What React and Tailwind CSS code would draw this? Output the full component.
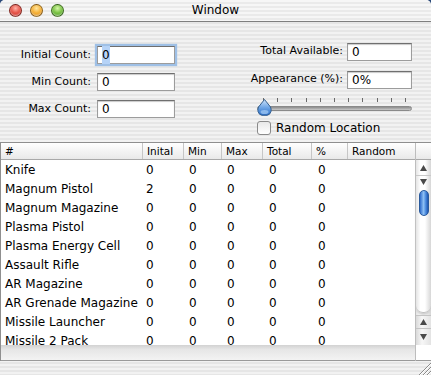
import React from "react";

const rows = [
    ["Knife", "0"],
    ["Magnum Pistol", "2"],
    ["Magnum Magazine", "0"],
    ["Plasma Pistol", "0"],
    ["Plasma Energy Cell", "0"],
    ["Assault Rifle", "0"],
    ["AR Magazine", "0"],
    ["AR Grenade Magazine", "0"],
    ["Missile Launcher", "0"],
    ["Missile 2 Pack", "0"],
];

const cols = "grid grid-cols-[142px_41px_38px_41px_49px_36px_68px]";

function Light({ color }) {
    return (
        <div className={`w-[13px] h-[13px] rounded-full border border-black/40 ${color} shadow-[inset_0_-1px_2px_rgba(255,255,255,0.6)]`} />
    );
}

function TextBox({ value, width, focused, selected }) {
    return (
        <div
            className={`h-[18px] ${width} shrink-0 bg-white border border-[#9c9c9c] border-t-[#6f6f6f] flex items-center pl-[4px] text-[12px] text-black ${focused ? "border-[#6d8fbf] shadow-[0_0_1px_2px_#9fc0e6]" : "shadow-[inset_0_1px_1px_#c9c9c9]"}`}
        >
            {selected ? <span className="bg-[#b6d3f7]">{value}</span> : value}
        </div>
    );
}

function Arrow({ up }) {
    return (
        <svg width="7" height="6" viewBox="0 0 7 6">
            <path d={up ? "M3.5 0 L7 6 L0 6 Z" : "M0 0 L7 0 L3.5 6 Z"} fill="#4a4a4a" />
        </svg>
    );
}

function ScrollButton({ up, h }) {
    return (
        <div className={`${h} w-full flex items-center justify-center bg-[linear-gradient(to_right,#d9d9d9,#f7f7f7_40%,#e3e3e3)] border-t border-[#c4c4c4]`}>
            <Arrow up={up} />
        </div>
    );
}

export default function App() {
    return (
        <div className="w-[431px] h-[375px] bg-[#2b4a7a] overflow-hidden font-['DejaVu_Sans',sans-serif] text-black">
            <div className="w-full h-full rounded-t-[5px] overflow-hidden flex flex-col bg-[repeating-linear-gradient(to_bottom,#f2f2f2_0px,#f2f2f2_2px,#e6e6e6_2px,#e6e6e6_4px)]">
                {/* title bar */}
                <div className="relative h-[22px] shrink-0 border-b border-[#7f7f7f] bg-[repeating-linear-gradient(to_bottom,#f6f6f6_0px,#f6f6f6_2px,#eaeaea_2px,#eaeaea_4px)] flex items-center">
                    <div className="flex gap-[8px] pl-[9px] pb-[1px]">
                        <Light color="bg-[radial-gradient(circle_at_50%_30%,#ffb3a8,#e2473b_55%,#a8180f)]" />
                        <Light color="bg-[radial-gradient(circle_at_50%_30%,#ffe7a0,#f4a928_55%,#b26a05)]" />
                        <Light color="bg-[radial-gradient(circle_at_50%_30%,#d6f7a8,#6dbb36_55%,#2f7a10)]" />
                    </div>
                    <div className="absolute inset-0 flex items-center justify-center text-[12px] pb-[1px]">Window</div>
                </div>

                {/* form */}
                <div className="h-[120px] shrink-0 flex">
                    <div className="pt-[24px] grid grid-cols-[91px_78px] gap-x-[6px] gap-y-[9px] items-center text-[11px] auto-rows-[18px]">
                        <div className="text-right">Initial Count:</div>
                        <TextBox value="0" width="w-[78px]" focused selected />
                        <div className="text-right">Min Count:</div>
                        <TextBox value="0" width="w-[78px]" />
                        <div className="text-right">Max Count:</div>
                        <TextBox value="0" width="w-[78px]" />
                    </div>
                    <div className="ml-[82px] pt-[20px] w-[155px] flex flex-col">
                        <div className="flex flex-col gap-[9px] text-[11px]">
                            <div className="h-[19px] flex items-center justify-end gap-[4px] whitespace-nowrap">
                                <span>Total Available:</span>
                                <TextBox value="0" width="w-[65px]" />
                            </div>
                            <div className="h-[19px] flex items-center justify-end gap-[4px] whitespace-nowrap">
                                <span>Appearance (%):</span>
                                <TextBox value="0%" width="w-[65px]" />
                            </div>
                        </div>
                        {/* slider */}
                        <div className="relative h-[18px] mt-[9px]">
                            <div className="flex justify-between pl-[6px] pr-[6px]">
                                {Array.from({ length: 11 }).map((_, i) => (
                                    <div key={i} className="w-px h-[4px] bg-[#6a6a6a]" />
                                ))}
                            </div>
                            <div className="mt-[4px] h-[5px] rounded-full bg-[linear-gradient(to_bottom,#8c8c8c,#c9c9c9)] border border-[#8a8a8a]" />
                            <svg className="absolute left-0 top-[1px]" width="15" height="17" viewBox="0 0 15 17">
                                <defs>
                                    <linearGradient id="th" x1="0" y1="0" x2="0" y2="1">
                                        <stop offset="0" stopColor="#cfe4fb" />
                                        <stop offset="0.5" stopColor="#6fa6e6" />
                                        <stop offset="1" stopColor="#2d6fc8" />
                                    </linearGradient>
                                </defs>
                                <path d="M7.5 0.5 L13.5 8 Q14.5 10 14 12.5 Q13 16 10 16.3 L5 16.3 Q2 16 1 12.5 Q0.5 10 1.5 8 Z" fill="url(#th)" stroke="#35608f" strokeWidth="1" />
                                <ellipse cx="7.5" cy="13" rx="4" ry="2" fill="#9cc6f3" opacity="0.8" />
                            </svg>
                        </div>
                        <div className="mt-[5px] flex items-center gap-[5px]">
                            <div className="w-[14px] h-[14px] rounded-[3px] border border-[#8a8a8a] bg-[linear-gradient(to_bottom,#e8e8e8,#ffffff)]" />
                            <span className="text-[12px] leading-none">Random Location</span>
                        </div>
                    </div>
                </div>

                {/* table */}
                <div className="shrink-0 h-[219px] border-t border-l border-[#8f8f8f] flex bg-white">
                    <div className="w-[414px] flex flex-col">
                        <div className={`${cols} h-[17px] text-[10.5px] bg-[linear-gradient(to_bottom,#ffffff,#e9e9e9)] border-b border-[#a9a9a9]`}>
                            {["#", "Inital", "Min", "Max", "Total", "%", "Random"].map((h) => (
                                <div key={h} className="pl-[4px] border-r border-[#c6c6c6] leading-[16px]">{h}</div>
                            ))}
                        </div>
                        <div className="h-[185px] overflow-hidden bg-white text-[12px]">
                            {rows.map(([name, initial]) => (
                                <div key={name} className={`${cols} h-[19px] items-center`}>
                                    <div className="pl-[4px] whitespace-nowrap overflow-hidden">{name}</div>
                                    <div className="pl-[3px]">{initial}</div>
                                    <div className="pl-[5px]">0</div>
                                    <div className="pl-[5px]">0</div>
                                    <div className="pl-[6px]">0</div>
                                    <div className="pl-[6px]">0</div>
                                    <div />
                                </div>
                            ))}
                        </div>
                        <div className="h-[16px] bg-[linear-gradient(to_bottom,#d2d2d2,#e6e6e6_30%,#f3f3f3)] border-b border-[#9a9a9a]" />
                    </div>
                    <div className="w-[16px] flex flex-col border-l border-[#bdbdbd]">
                        <div className="h-[17px] bg-[linear-gradient(to_bottom,#ffffff,#e9e9e9)] border-b border-[#a9a9a9]" />
                        <div className="h-[185px] flex flex-col bg-[linear-gradient(to_right,#e4e4e4,#ffffff_30%,#ffffff_60%,#d6d6d6)]">
                            <div className="h-[15px] flex items-center justify-center"><Arrow up /></div>
                            <div className="h-[13px] flex items-center justify-center border-t border-[#c9c9c9]"><Arrow /></div>
                            <div className="h-[125px] px-[2px] pt-[2px] rounded-b-[7px] border-b border-[#c2c2c2] shadow-[0_2px_2px_#d0d0d0]">
                                <div className="h-[26px] w-[10px] mx-auto rounded-full border border-[#2a5a9c] bg-[linear-gradient(to_right,#2f6ccc,#8ec0f4_45%,#4f8ee0_70%,#1f56b0)]" />
                            </div>
                            <div className="h-[2px]" />
                            <ScrollButton up h="h-[13px]" />
                            <ScrollButton h="h-[17px]" />
                        </div>
                        <div className="h-[16px] bg-white border-b border-[#9a9a9a]" />
                    </div>
                </div>

                {/* bottom strip with grow box */}
                <div className="flex-1 flex justify-end items-end">
                    <svg width="13" height="13" viewBox="0 0 13 13">
                        {[0, 4, 8].map((o) => (
                            <g key={o}>
                                <line x1={13} y1={o + 1} x2={o + 1} y2={13} stroke="#8a8a8a" strokeWidth="1" />
                                <line x1={13} y1={o + 2} x2={o + 2} y2={13} stroke="#ffffff" strokeWidth="1" />
                            </g>
                        ))}
                    </svg>
                </div>
            </div>
        </div>
    );
}
